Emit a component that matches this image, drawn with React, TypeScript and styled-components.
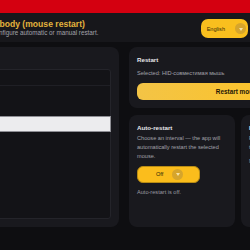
import React from "react";
import styled, { createGlobalStyle } from "styled-components";

const GlobalStyle = createGlobalStyle`
  html, body {
    margin: 0;
    padding: 0;
    background: #0e0e11;
    overflow: hidden;
  }
  body {
    width: 250px;
    height: 250px;
    font-family: "Liberation Sans", "Noto Sans", sans-serif;
  }
`;

const rows = ["#1", "#2"];

const App = () => {
  return (
    <>
      <GlobalStyle />
      <Shell>
        <RedBar />
        <Header>
          <HeaderText>
            <Title>Nobody (mouse restart)</Title>
            <Subtitle>Configure automatic or manual restart.</Subtitle>
          </HeaderText>
          <Pill>
            English
            <Chevron />
          </Pill>
        </Header>

        <Main>
          <DeviceCard>
            <CardTitle>Mice</CardTitle>
            <List>
              <ListHead>ID</ListHead>
              {rows.map((r) => (
                <ListRow key={r}>{r}</ListRow>
              ))}
              <ListRow selected>#3</ListRow>
            </List>
          </DeviceCard>

          <Side>
            <Card wide>
              <CardTitle>Restart</CardTitle>
              <Muted>Selected: HID-совместимая мышь</Muted>
              <RestartButton>Restart mouse</RestartButton>
            </Card>

            <Card>
              <CardTitle>Auto-restart</CardTitle>
              <Para>
                Choose an interval — the app will automatically restart the
                selected mouse.
              </Para>
              <Select>
                Off
                <Chevron />
              </Select>
              <Status>Auto-restart is off.</Status>
            </Card>

            <Card>
              <CardTitle>Hotkey</CardTitle>
              <Para>
                Press a key combination to restart the mouse right away.
              </Para>
              <Status>No hotkey set.</Status>
            </Card>
          </Side>
        </Main>
      </Shell>
    </>
  );
};

export default App;

const Shell = styled.div`
  width: 310px;
  margin-left: -60px;
`;

const RedBar = styled.div`
  height: 13px;
  background: #d40010;
`;

const Header = styled.header`
  height: 29px;
  background: #17171b;
  display: flex;
  align-items: center;
  justify-content: space-between;
  padding: 0 2px 0 51px;
`;

const HeaderText = styled.div`
  display: flex;
  flex-direction: column;
`;

const Title = styled.div`
  font-size: 8.6px;
  font-weight: 700;
  line-height: 10px;
  color: #e3b33d;
  margin-left: -3px;
  white-space: nowrap;
`;

const Subtitle = styled.div`
  font-size: 6.3px;
  line-height: 8px;
  color: #a2a2aa;
  white-space: nowrap;
`;

const Pill = styled.div`
  height: 19px;
  margin-top: 2px;
  display: flex;
  align-items: center;
  gap: 10px;
  padding: 0 2px 0 6px;
  border-radius: 7px;
  background: #f9bf1e;
  color: #3a2c08;
  font-size: 5.6px;
`;

const Chevron = styled.span`
  width: 11px;
  height: 11px;
  border-radius: 50%;
  background: #d6a52c;
  display: flex;
  align-items: center;
  justify-content: center;

  &::after {
    content: "";
    border-left: 2.5px solid transparent;
    border-right: 2.5px solid transparent;
    border-top: 3px solid #f6e2a4;
    margin-top: 1px;
  }
`;

const Main = styled.main`
  display: flex;
  gap: 10px;
  padding: 5px 0 0 8px;
`;

const DeviceCard = styled.section`
  width: 171px;
  flex-shrink: 0;
  box-sizing: border-box;
  padding: 8px;
  border-radius: 8px;
  background: #19191e;
  display: flex;
  flex-direction: column;
`;

const List = styled.div`
  flex: 1;
  margin-top: 5px;
  border: 1px solid #24242a;
  border-radius: 3px;
  background: #131317;
  display: flex;
  flex-direction: column;
`;

const ListHead = styled.div`
  height: 15px;
  border-bottom: 1px solid #1f1f25;
  font-size: 5.6px;
  line-height: 15px;
  color: #8d8d95;
  padding-left: 4px;
`;

const ListRow = styled.div<{ selected?: boolean }>`
  height: 15px;
  box-sizing: border-box;
  font-size: 5.6px;
  line-height: 13px;
  padding-left: 4px;
  color: ${(p) => (p.selected ? "#222" : "#a2a2aa")};
  background: ${(p) => (p.selected ? "#ececee" : "transparent")};
  border: 1px solid ${(p) => (p.selected ? "#8e8e94" : "transparent")};
  margin-right: -1px;
  &:last-child {
    height: 16px;
  }
`;

const Side = styled.div`
  display: grid;
  grid-template-columns: 106px 106px;
  grid-template-rows: 61px 112px;
  gap: 7px 6px;
  flex-shrink: 0;
`;

const Card = styled.section<{ wide?: boolean }>`
  grid-column: ${(p) => (p.wide ? "span 2" : "auto")};
  box-sizing: border-box;
  padding: 8px;
  border-radius: 8px;
  background: #19191e;
  display: flex;
  flex-direction: column;
  align-items: flex-start;
`;

const CardTitle = styled.div`
  font-size: 6.2px;
  font-weight: 700;
  line-height: 9px;
  color: #e6e6ea;
`;

const Muted = styled.div`
  margin-top: 5px;
  font-size: 5.6px;
  line-height: 9px;
  color: #a2a2aa;
  white-space: nowrap;
`;

const RestartButton = styled.button`
  align-self: stretch;
  height: 19px;
  margin-top: 5px;
  border: none;
  border-radius: 6px;
  background: linear-gradient(90deg, #f3c446, #ffc21c);
  color: #1d1607;
  font-family: inherit;
  font-size: 6.4px;
  font-weight: 700;
`;

const Para = styled.p`
  margin: 1.5px 0 0;
  font-size: 5.6px;
  line-height: 9px;
  color: #a2a2aa;
`;

const Select = styled.div`
  width: 63px;
  height: 17px;
  box-sizing: border-box;
  margin-top: 5px;
  display: flex;
  align-items: center;
  gap: 9px;
  padding-left: 18px;
  border: 1px solid #b98c14;
  border-radius: 6px;
  background: #fbbd1c;
  color: #2a1f06;
  font-size: 5.6px;
`;

const Status = styled.div`
  margin-top: 5.5px;
  font-size: 5.6px;
  line-height: 9px;
  color: #9a9aa2;
`;
